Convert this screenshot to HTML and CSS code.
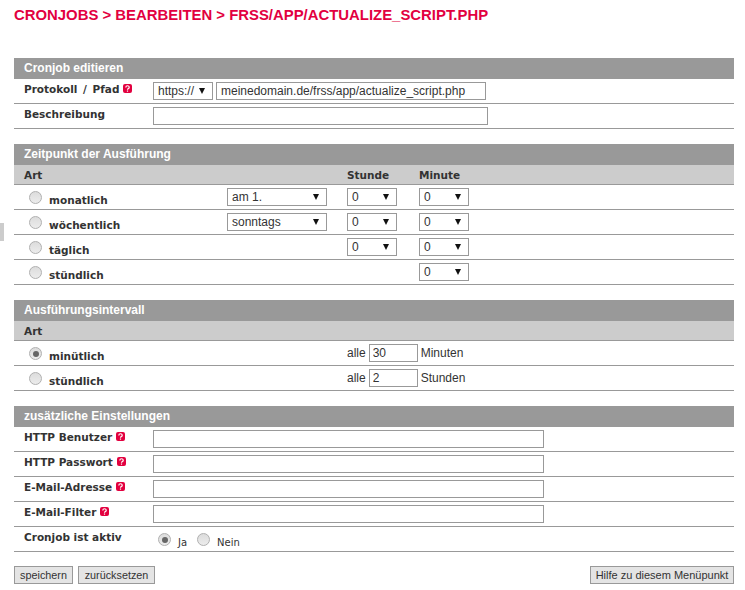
FILE: index.html
```html
<!DOCTYPE html>
<html lang="de">
<head>
<meta charset="utf-8">
<title>Cronjob bearbeiten</title>
<link rel="stylesheet" href="styles.css">
</head>
<body>
<div class="edge-tab"></div>
<h1 class="title">Cronjobs &gt; Bearbeiten &gt; frss/app/actualize_script.php</h1>
<form class="form">
  <section class="section">
    <h2 class="head">Cronjob editieren</h2>
    <div class="row">
      <div class="label col-label"><span class="spaced">Protokoll / Pfad</span> <svg class="help" viewBox="0 0 9 9"><rect width="9" height="9" rx="2" fill="#e2003f"/><path d="M2.8 3.4c0-2.2 3.4-2.2 3.4 0 0 1.2-1.7 1.2-1.7 2.4" fill="none" stroke="#fff" stroke-width="1.2"/><rect x="3.9" y="6.5" width="1.2" height="1.2" fill="#fff"/></svg></div>
      <div class="select w-proto"><span>https://</span><i class="arrow"></i></div>
      <input class="input w-path" type="text" value="meinedomain.de/frss/app/actualize_script.php">
    </div>
    <div class="row">
      <div class="label col-label">Beschreibung</div>
      <input class="input w-desc" type="text">
    </div>
  </section>

  <section class="section">
    <h2 class="head">Zeitpunkt der Ausführung</h2>
    <div class="sub time-grid">
      <div class="label c-art">Art</div>
      <div class="label c-hour">Stunde</div>
      <div class="label c-min">Minute</div>
    </div>
    <div class="row time-grid">
      <label class="c-art opt"><span class="radio"></span><span class="label">monatlich</span></label>
      <div class="select w-day c-day"><span>am 1.</span><i class="arrow"></i></div>
      <div class="select w-num c-hour"><span>0</span><i class="arrow"></i></div>
      <div class="select w-num c-min"><span>0</span><i class="arrow"></i></div>
    </div>
    <div class="row time-grid">
      <label class="c-art opt"><span class="radio"></span><span class="label">wöchentlich</span></label>
      <div class="select w-day c-day"><span>sonntags</span><i class="arrow"></i></div>
      <div class="select w-num c-hour"><span>0</span><i class="arrow"></i></div>
      <div class="select w-num c-min"><span>0</span><i class="arrow"></i></div>
    </div>
    <div class="row time-grid">
      <label class="c-art opt"><span class="radio"></span><span class="label">täglich</span></label>
      <div class="select w-num c-hour"><span>0</span><i class="arrow"></i></div>
      <div class="select w-num c-min"><span>0</span><i class="arrow"></i></div>
    </div>
    <div class="row time-grid">
      <label class="c-art opt"><span class="radio"></span><span class="label">stündlich</span></label>
      <div class="select w-num c-min"><span>0</span><i class="arrow"></i></div>
    </div>
  </section>

  <section class="section">
    <h2 class="head">Ausführungsintervall</h2>
    <div class="sub"><div class="label">Art</div></div>
    <div class="row time-grid">
      <label class="c-art opt"><span class="radio on"></span><span class="label">minütlich</span></label>
      <div class="c-every"><span class="text">alle</span><input class="input w-every" type="text" value="30"><span class="text">Minuten</span></div>
    </div>
    <div class="row time-grid">
      <label class="c-art opt"><span class="radio"></span><span class="label">stündlich</span></label>
      <div class="c-every"><span class="text">alle</span><input class="input w-every" type="text" value="2"><span class="text">Stunden</span></div>
    </div>
  </section>

  <section class="section">
    <h2 class="head">zusätzliche Einstellungen</h2>
    <div class="row">
      <div class="label col-label">HTTP Benutzer <svg class="help" viewBox="0 0 9 9"><rect width="9" height="9" rx="2" fill="#e2003f"/><path d="M2.8 3.4c0-2.2 3.4-2.2 3.4 0 0 1.2-1.7 1.2-1.7 2.4" fill="none" stroke="#fff" stroke-width="1.2"/><rect x="3.9" y="6.5" width="1.2" height="1.2" fill="#fff"/></svg></div>
      <input class="input w-wide" type="text">
    </div>
    <div class="row">
      <div class="label col-label">HTTP Passwort <svg class="help" viewBox="0 0 9 9"><rect width="9" height="9" rx="2" fill="#e2003f"/><path d="M2.8 3.4c0-2.2 3.4-2.2 3.4 0 0 1.2-1.7 1.2-1.7 2.4" fill="none" stroke="#fff" stroke-width="1.2"/><rect x="3.9" y="6.5" width="1.2" height="1.2" fill="#fff"/></svg></div>
      <input class="input w-wide" type="text">
    </div>
    <div class="row">
      <div class="label col-label">E-Mail-Adresse <svg class="help" viewBox="0 0 9 9"><rect width="9" height="9" rx="2" fill="#e2003f"/><path d="M2.8 3.4c0-2.2 3.4-2.2 3.4 0 0 1.2-1.7 1.2-1.7 2.4" fill="none" stroke="#fff" stroke-width="1.2"/><rect x="3.9" y="6.5" width="1.2" height="1.2" fill="#fff"/></svg></div>
      <input class="input w-wide" type="text">
    </div>
    <div class="row">
      <div class="label col-label">E-Mail-Filter <svg class="help" viewBox="0 0 9 9"><rect width="9" height="9" rx="2" fill="#e2003f"/><path d="M2.8 3.4c0-2.2 3.4-2.2 3.4 0 0 1.2-1.7 1.2-1.7 2.4" fill="none" stroke="#fff" stroke-width="1.2"/><rect x="3.9" y="6.5" width="1.2" height="1.2" fill="#fff"/></svg></div>
      <input class="input w-wide" type="text">
    </div>
    <div class="row">
      <div class="label col-label">Cronjob ist aktiv</div>
      <div class="choice">
        <span class="radio on"></span><span class="small">Ja</span>
        <span class="radio"></span><span class="small">Nein</span>
      </div>
    </div>
  </section>

  <div class="actions">
    <button class="btn btn-save" type="button">speichern</button>
    <button class="btn btn-reset" type="button">zurücksetzen</button>
    <button class="btn btn-help" type="button">Hilfe zu diesem Menüpunkt</button>
  </div>
</form>
</body>
</html>
```
FILE: styles.css
```css
* { box-sizing: border-box; }
html, body { margin: 0; padding: 0; }
body {
  position: relative;
  width: 745px;
  height: 590px;
  overflow: hidden;
  background: #fff;
  font-family: "Liberation Sans", Arial, sans-serif;
  font-size: 12px;
  color: #333;
}
.edge-tab {
  position: absolute;
  left: 0;
  top: 223px;
  width: 4px;
  height: 18px;
  background: #ccc;
}
.title {
  margin: 0;
  padding: 7px 0 0 14px;
  height: 58px;
  font-size: 14.9px;
  line-height: 16px;
  font-weight: bold;
  text-transform: uppercase;
  color: #e2003f;
}
.form { margin: 0 11px 0 14px; }
.section { margin-bottom: 15px; }
.head {
  margin: 0;
  height: 21px;
  padding-left: 10px;
  background: #999;
  color: #fff;
  font-size: 12px;
  line-height: 20px;
  font-weight: bold;
}
.sub {
  height: 20px;
  padding: 4px 0 0 10px;
  background: #ccc;
  border-bottom: 1px solid #999;
}
.row {
  height: 25px;
  padding-left: 10px;
  border-bottom: 1px solid #999;
  display: flex;
  align-items: flex-start;
}
.label {
  font-family: "DejaVu Sans", Verdana, sans-serif;
  font-size: 10.5px;
  font-weight: bold;
  line-height: 13px;
  color: #333;
}
.spaced { word-spacing: 2px; }
.col-label {
  flex: 0 0 129px;
  padding-top: 4px;
  display: flex;
  align-items: flex-start;
  gap: 4px;
  white-space: nowrap;
}
.help { width: 9px; height: 9px; margin-top: 1px; flex: none; }
.input {
  display: block;
  height: 18px;
  margin: 3px 0 0;
  padding: 0 4px;
  border: 1px solid #999;
  background: #fff;
  font: 12px "Liberation Sans", Arial, sans-serif;
  color: #333;
  outline: none;
}
.select {
  height: 18px;
  margin-top: 3px;
  padding: 0 7px 0 4px;
  border: 1px solid #999;
  background: #fff;
  display: flex;
  align-items: center;
  justify-content: space-between;
  font-size: 12px;
  line-height: 14px;
  color: #333;
}
.arrow {
  width: 0;
  height: 0;
  border-left: 3px solid transparent;
  border-right: 3px solid transparent;
  border-top: 6px solid #111;
}
.w-proto { width: 60px; margin-right: 3px; }
.w-path { width: 270px; }
.w-desc { width: 335px; }
.w-wide { width: 391px; }
.w-day { width: 100px; }
.w-num { width: 50px; }
.w-every { width: 49px; margin: 0 3px; padding: 0 3px; }

.time-grid {
  display: grid;
  grid-template-columns: 203px 120px 72px 1fr;
  align-items: start;
}
.c-art { grid-column: 1; }
.c-day { grid-column: 2; }
.c-hour { grid-column: 3; }
.c-min { grid-column: 4; }
.c-every {
  grid-column: 3 / 5;
  display: flex;
  align-items: center;
  margin-top: 3px;
}
.c-every .text { line-height: 18px; }
.opt {
  display: flex;
  align-items: flex-start;
  padding-left: 5px;
}
.opt .label { margin-left: 7px; padding-top: 9px; }
.radio {
  flex: none;
  display: inline-block;
  width: 13px;
  height: 13px;
  margin-top: 6px;
  border: 1px solid #b0b0b0;
  border-radius: 50%;
  background: linear-gradient(#dcdcdc, #ececec);
  position: relative;
}
.radio.on::after {
  content: "";
  position: absolute;
  left: 2.5px;
  top: 2.5px;
  width: 6px;
  height: 6px;
  border-radius: 50%;
  background: #666;
}
.choice {
  display: flex;
  align-items: flex-start;
  padding-left: 5px;
  height: 24px;
}
.small {
  font-family: "DejaVu Sans", Verdana, sans-serif;
  font-size: 10px;
  line-height: 12px;
  padding-top: 10px;
  margin-left: 7px;
  margin-right: 10px;
  color: #333;
}
.small:last-child { margin-right: 0; }
.actions {
  display: flex;
  gap: 5px;
  margin-top: -1px;
}
.btn {
  height: 18px;
  padding: 0;
  border: 1px solid #999;
  border-radius: 0;
  background: #e4e4e4;
  font: 10.8px "Liberation Sans", Arial, sans-serif;
  color: #333;
  line-height: 16px;
  text-align: center;
}
.btn-save { width: 59px; }
.btn-reset { width: 77px; }
.btn-help { width: 144px; margin-left: auto; font-size: 11px; }
```
